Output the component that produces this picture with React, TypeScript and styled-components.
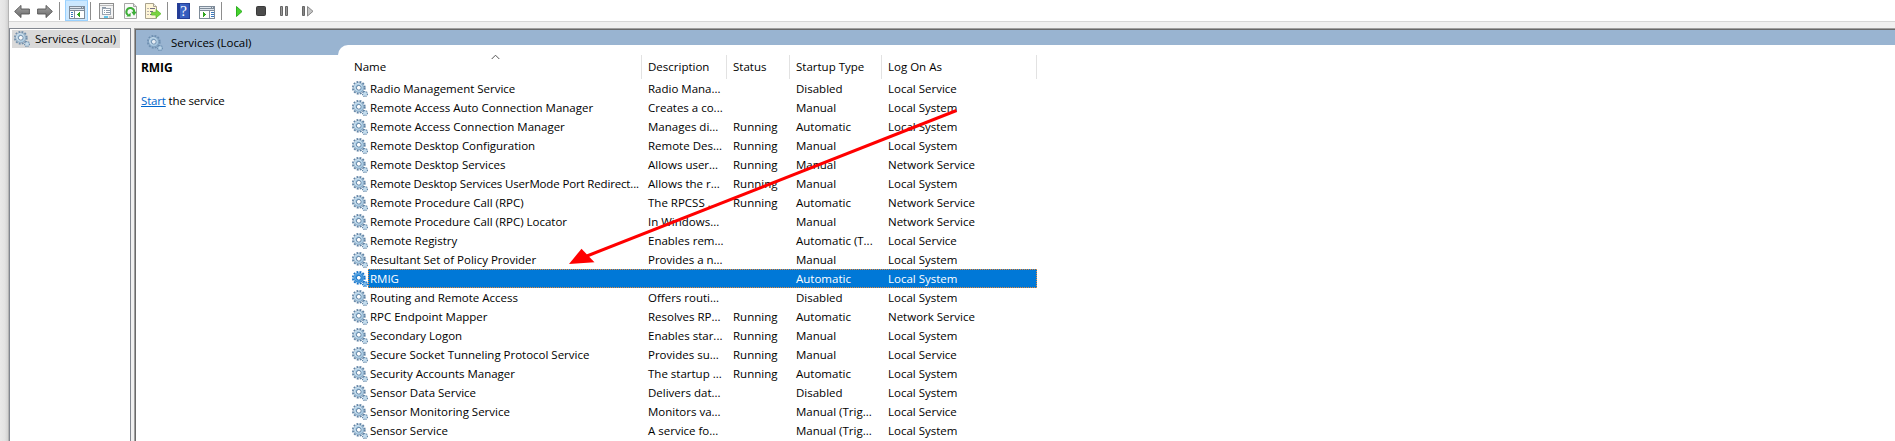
import React from "react";
import styled, { createGlobalStyle } from "styled-components";

const Global = createGlobalStyle`
  *{box-sizing:border-box}
  html,body{margin:0;background:#f0f0f0;overflow:hidden}
  body{font-family:"Open Sans","Noto Sans",sans-serif;font-size:11.5px;color:#000;line-height:19px}
`;
const Window = styled.div`
  position:relative;display:flex;width:1895px;height:441px;overflow:hidden;background:#f0f0f0;
`;
const Backdrop = styled.div`
  flex:none;width:8px;background:linear-gradient(90deg,#e9e9e9,#e3e3e3 60%,#d2d2d2);
`;
const Main = styled.div`flex:1;display:flex;flex-direction:column;min-width:0;border-left:1px solid #b4b4b4;`;
const Toolbar = styled.div`
  flex:none;display:flex;align-items:flex-start;height:22px;background:#fff;border-bottom:1px solid #d7d7d7;
`;
const Tool = styled.div<{ $gap: number }>`
  flex:none;width:16px;height:20px;margin-left:${(p) => p.$gap}px;
  svg{display:block}
`;
const ActiveTool = styled.div`
  flex:none;width:23px;height:21px;margin-left:5px;padding-left:3px;background:#cce8ff;border:1px solid #99d1ff;border-top-color:#a8d8ff;
  svg{display:block;margin-top:-1px}
`;
const Divider = styled.div<{ $gap: number }>`
  flex:none;width:1px;height:18px;margin:2px 0 0 ${(p) => p.$gap}px;background:#8d8d8d;
`;
const Panels = styled.div`flex:1;display:flex;min-height:0;padding-top:6px;`;
const Tree = styled.div`
  flex:none;width:122px;background:#fff;border:solid #828790;border-width:1px 1px 0 1px;padding:1px 0 0 2px;
`;
const TreeNode = styled.div`
  display:flex;align-items:center;width:108px;height:18px;line-height:17px;background:#d9d9d9;padding:0 0 1px 2px;
  svg{margin-right:5px;opacity:.85}
`;
const Details = styled.div`
  flex:1;margin-left:3px;display:flex;flex-direction:column;min-width:0;background:#fff;
  border:solid #a0a0a0;border-width:1px 0 0 1px;
`;
const Inner = styled.div`flex:1;display:flex;min-height:0;border:solid #696969;border-width:1px 0 0 1px;`;
const Side = styled.div`flex:none;width:202px;`;
const Banner = styled.div`
  display:flex;align-items:center;height:25px;background:#99b4d1;padding-left:11px;letter-spacing:-.04px;
  svg{margin-right:8px;opacity:.75}
`;
const Info = styled.div`padding:3px 0 0 5px;`;
const Selected = styled.div`font-weight:700;font-size:12px;letter-spacing:-.1px;`;
const Action = styled.div`margin-top:14px;letter-spacing:-.17px;`;
const Link = styled.a`color:#0066cc;text-decoration:underline;`;
const Content = styled.div`flex:1;min-width:0;background:#99b4d1;padding-top:15px;`;
const Sheet = styled.div`height:100%;background:#fff;border-top-left-radius:10px;padding:10px 0 0 12px;`;
const columns = "292px 85px 63px 92px 155px";
const Header = styled.div`display:grid;grid-template-columns:${columns};height:24px;line-height:24px;`;
const HeadCell = styled.div<{ $first?: boolean }>`
  position:relative;border-right:1px solid #e2e2e2;padding-left:${(p) => (p.$first ? 4 : 6)}px;white-space:pre;
`;
const SortMark = styled.svg`position:absolute;left:141px;top:-1px;`;
const Row = styled.div`display:grid;grid-template-columns:${columns};width:687px;height:19px;position:relative;`;
const SelectedRow = styled(Row)`
  color:#fff;background:linear-gradient(90deg,#fff 18px,#0078d7 18px);
  &::after{content:"";position:absolute;left:18px;right:0;top:0;bottom:0;border:1px dotted #e98b3b;}
`;
const NameCell = styled.div`
  display:flex;align-items:center;padding-left:2px;white-space:pre;
  svg{flex:none;margin-right:2px}
`;
const Cell = styled.div`padding-left:6px;white-space:pre;`;
const Label = styled.span<{ $tight: boolean }>`letter-spacing:${(p) => (p.$tight ? "-.15px" : "-.01px")};`;
const Pointer = styled.svg`position:absolute;left:0;top:0;pointer-events:none;`;

function Gears({ selected = false }: { selected?: boolean }) {
  const edge = selected ? "#0f70c8" : "#5f83a5";
  const body = selected ? "#3f97de" : "#a9cbe3";
  return (
    <svg width="16" height="16" viewBox="0 0 16 16">
      <circle cx="6.800" cy="6.800" r="6" fill="none" stroke={edge} strokeWidth="1.700" strokeDasharray="1.900 1.242" />
      <circle cx="6.800" cy="6.800" r="4.900" fill={body} stroke={edge} strokeWidth=".6" />
      <circle cx="6" cy="6" r="3.500" fill="none" stroke="#d9ebf7" strokeWidth=".9" opacity={selected ? 0.3 : 1} />
      <circle cx="6.800" cy="6.800" r="2.400" fill="#fff" stroke={edge} strokeWidth="1" />
      <circle cx="13" cy="13" r="2.400" fill="none" stroke={edge} strokeWidth="1.300" strokeDasharray="1.100 .785" />
      <circle cx="13" cy="13" r="1.300" fill="#fff" stroke={body} strokeWidth="1.300" />
    </svg>
  );
}

const Arrow = ({ flip = false }: { flip?: boolean }) => (
  <svg width="16" height="20" viewBox="0 0 16 20">
    <defs><linearGradient id="ag" x2="0" y2="1"><stop stopColor="#a5a5a5" /><stop offset="1" stopColor="#686868" /></linearGradient></defs>
    <path transform={flip ? "translate(16 0) scale(-1 1)" : undefined} d="M.6 11.500 7 5.400V9h8.400v5H7v3.600z" fill="url(#ag)" stroke="#555" strokeWidth=".9" strokeLinejoin="round" />
  </svg>
);
const PaneIcon = ({ right = false }: { right?: boolean }) => (
  <svg width="16" height="20" viewBox="0 0 16 20" shapeRendering="crispEdges">
    <path d="M0 6h16v13H0z" fill="#7f8c9a" />
    <path d="M1 7h11v1H1zM13 7h1v1h-1zM1 9h14v1H1z" fill="#dfe6ee" />
    <path d="M1 11h14v7H1z" fill="#fff" />
    <path d={right ? "M10 11h1v7h-1z" : "M5 11h1v7H5z"} fill="#7f8c9a" />
    <path d={right ? "M12 12h3v1h-3zM12 14h3v1h-3zM12 16h3v1h-3z" : "M2 12h2v1H2zM2 14h2v1H2zM2 16h2v1H2z"} fill="#3978bd" />
    <path d={right ? "M4 12v5h1v-1h1v-1h1v-1H6v-1H5v-1z" : "M11 12v5h-1v-1H9v-1H8v-1h1v-1h1v-1z"} fill="#2fa51f" />
  </svg>
);
const PropertiesIcon = () => (
  <svg width="16" height="20" viewBox="0 0 16 20" shapeRendering="crispEdges">
    <path d="M1.500 3.500h14v15h-14z" fill="#f4f4f4" stroke="#8d8d8d" />
    <path d="M2 5h13v1H2z" fill="#b9b9b9" />
    <path d="M4.500 8.500h8v6h-8z" fill="#fff" stroke="#99a4b0" />
    <path d="M4 7h4v1H4zM6 10h1v1H6zM8 10h4v1H8zM6 12h1v1H6zM8 12h4v1H8z" fill="#8d99a7" />
    <path d="M6 16h4v2H6z" fill="#5fc4ea" /><path d="M11 16h3v2h-3z" fill="#ccc" />
  </svg>
);
const RefreshIcon = () => (
  <svg width="16" height="20" viewBox="0 0 16 20">
    <path d="M1.500 3.500h9l3 3v12h-12z" fill="#fafafa" stroke="#a6a6a6" />
    <path d="M10.500 3.500v3h3" fill="#ddd" stroke="#a6a6a6" />
    <path d="M5.300 15.200A3.900 3.900 0 1 1 11.200 12" fill="none" stroke="#3dae38" strokeWidth="2" />
    <path d="M8.300 11.800h5.400l-2.700 4z" fill="#3dae38" /><path d="M3.300 16.500h4.300v-3.800z" fill="#3dae38" />
  </svg>
);
const ExportIcon = () => (
  <svg width="17" height="20" viewBox="0 0 17 20">
    <path d="M.5 3.500h8l3 3v12H.5z" fill="#fff6d7" stroke="#a8a28e" />
    <path d="M8.500 3.500v3h3" fill="#eee" stroke="#a8a28e" />
    <path d="M2.500 8.500h1M5 8.500h5M2.500 11.500h1M5 11.500h3M2.500 14.500h1M5 14.500h3" stroke="#756f86" />
    <path d="M6.500 12.300H11V9.500l5 4.200-5 4.200v-2.800H6.500z" fill="#7bd43f" stroke="#5cb62c" strokeWidth=".7" />
  </svg>
);
const HelpBox = styled.div`
  width:13px;height:16px;margin:3px 0 0 1px;background:linear-gradient(90deg,#233c97 2px,#4169c9 2px,#3157b8);
  border:1px solid #263f96;color:#fff;font:400 15px/14px "Liberation Serif",serif;text-align:center;
`;

type Service = [string, string, string, string, string];
const services: Service[] = [
  ["Radio Management Service", "Radio Mana...", "", "Disabled", "Local Service"],
  ["Remote Access Auto Connection Manager", "Creates a co...", "", "Manual", "Local System"],
  ["Remote Access Connection Manager", "Manages di...", "Running", "Automatic", "Local System"],
  ["Remote Desktop Configuration", "Remote Des...", "Running", "Manual", "Local System"],
  ["Remote Desktop Services", "Allows user...", "Running", "Manual", "Network Service"],
  ["Remote Desktop Services UserMode Port Redirect...", "Allows the r...", "Running", "Manual", "Local System"],
  ["Remote Procedure Call (RPC)", "The RPCSS ...", "Running", "Automatic", "Network Service"],
  ["Remote Procedure Call (RPC) Locator", "In Windows...", "", "Manual", "Network Service"],
  ["Remote Registry", "Enables rem...", "", "Automatic (T...", "Local Service"],
  ["Resultant Set of Policy Provider", "Provides a n...", "", "Manual", "Local System"],
  ["RMIG", "", "", "Automatic", "Local System"],
  ["Routing and Remote Access", "Offers routi...", "", "Disabled", "Local System"],
  ["RPC Endpoint Mapper", "Resolves RP...", "Running", "Automatic", "Network Service"],
  ["Secondary Logon", "Enables star...", "Running", "Manual", "Local System"],
  ["Secure Socket Tunneling Protocol Service", "Provides su...", "Running", "Manual", "Local Service"],
  ["Security Accounts Manager", "The startup ...", "Running", "Automatic", "Local System"],
  ["Sensor Data Service", "Delivers dat...", "", "Disabled", "Local System"],
  ["Sensor Monitoring Service", "Monitors va...", "", "Manual (Trig...", "Local Service"],
  ["Sensor Service", "A service fo...", "", "Manual (Trig...", "Local System"],
];

export default function App() {
  return (
    <>
      <Global />
      <Window>
        <Backdrop />
        <Main>
          <Toolbar>
            <Tool $gap={5}><Arrow /></Tool>
            <Tool $gap={7}><Arrow flip /></Tool>
            <Divider $gap={6} />
            <ActiveTool><PaneIcon /></ActiveTool>
            <Divider $gap={2} />
            <Tool $gap={7}><PropertiesIcon /></Tool>
            <Tool $gap={9}><RefreshIcon /></Tool>
            <Tool $gap={6}><ExportIcon /></Tool>
            <Divider $gap={6} />
            <Tool $gap={8}><HelpBox>?</HelpBox></Tool>
            <Tool $gap={7}><PaneIcon right /></Tool>
            <Divider $gap={6} />
            <Tool $gap={9}>
              <svg width="16" height="20"><path d="M5.500 6.500v10l5.500-5z" fill="#45d32c" stroke="#2fae22" /></svg>
            </Tool>
            <Tool $gap={6}>
              <svg width="16" height="20"><rect x="3.500" y="6.500" width="9" height="9" rx="1" fill="#4c4c4c" stroke="#3a3a3a" /></svg>
            </Tool>
            <Tool $gap={8}>
              <svg width="16" height="20"><path d="M3.500 6.500h2v9h-2zM8.500 6.500h2v9h-2z" fill="#999" stroke="#666" /></svg>
            </Tool>
            <Tool $gap={7}>
              <svg width="16" height="20"><path d="M2.500 6.500h2v9h-2z" fill="#888" stroke="#666" /><path d="M7.500 6.500v9.500l5.500-4.700z" fill="#c5c5c5" stroke="#8a8a8a" /></svg>
            </Tool>
          </Toolbar>
          <Panels>
            <Tree><TreeNode><Gears />Services (Local)</TreeNode></Tree>
            <Details>
              <Inner>
                <Side>
                  <Banner><Gears />Services (Local)</Banner>
                  <Info>
                    <Selected>RMIG</Selected>
                    <Action><Link>Start</Link> the service</Action>
                  </Info>
                </Side>
                <Content>
                  <Sheet>
                    <Header>
                      <HeadCell $first>
                        Name
                        <SortMark width="9" height="6"><path d="M.7 5 4.500 1.200 8.300 5" fill="none" stroke="#555" /></SortMark>
                      </HeadCell>
                      <HeadCell>Description</HeadCell>
                      <HeadCell>Status</HeadCell>
                      <HeadCell>Startup Type</HeadCell>
                      <HeadCell>Log On As</HeadCell>
                    </Header>
                    {services.map(([name, ...rest]) => {
                      const Line = name === "RMIG" ? SelectedRow : Row;
                      return (
                        <Line key={name}>
                          <NameCell>
                            <Gears selected={name === "RMIG"} />
                            <Label $tight={name.length > 42}>{name}</Label>
                          </NameCell>
                          {rest.map((text, i) => <Cell key={i}>{text}</Cell>)}
                        </Line>
                      );
                    })}
                  </Sheet>
                </Content>
              </Inner>
            </Details>
          </Panels>
        </Main>
        <Pointer width="1000" height="280">
          <path d="M956.500 110.500 587 256" stroke="#f00" strokeWidth="3" />
          <path d="M569 264 581.500 248.800 594.500 262.300z" fill="#f00" />
        </Pointer>
      </Window>
    </>
  );
}
